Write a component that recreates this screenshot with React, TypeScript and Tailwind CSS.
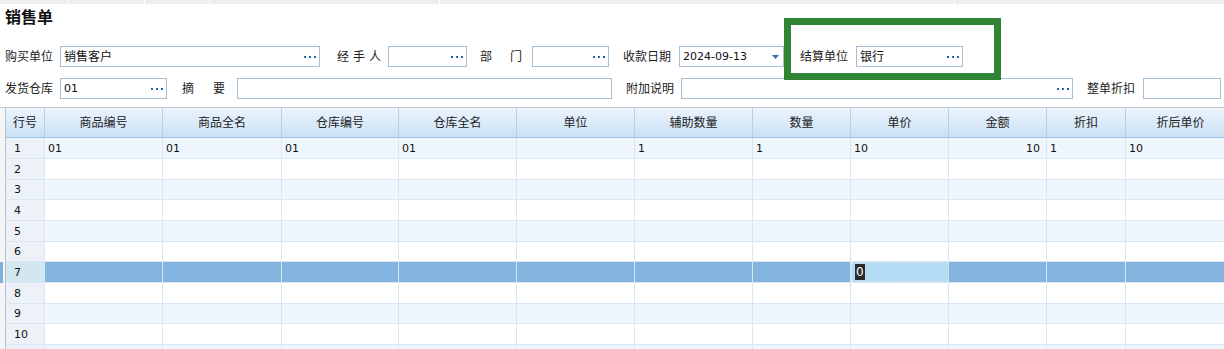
import React from "react";

type Col = { w: number; label: string };

const cols: Col[] = [
  { w: 39, label: "行号" },
  { w: 118, label: "商品编号" },
  { w: 119, label: "商品全名" },
  { w: 117, label: "仓库编号" },
  { w: 118, label: "仓库全名" },
  { w: 118, label: "单位" },
  { w: 118, label: "辅助数量" },
  { w: 98, label: "数量" },
  { w: 98, label: "单价" },
  { w: 98, label: "金额" },
  { w: 79, label: "折扣" },
  { w: 110, label: "折后单价" },
];

const firstRow = ["1", "01", "01", "01", "01", "", "1", "1", "10", "10", "1", "10"];
const rowHeights = [21, 21, 20, 21, 21, 20, 21, 21, 20, 21, 21];

const Dots = () => (
  <svg width="12" height="4" viewBox="0 0 12 4" className="shrink-0">
    <rect x="0" y="1" width="2" height="2" fill="#2c64ab" />
    <rect x="5" y="1" width="2" height="2" fill="#2c64ab" />
    <rect x="10" y="1" width="2" height="2" fill="#2c64ab" />
  </svg>
);

const Field = ({ w, value, dots = true }: { w: number; value?: string; dots?: boolean }) => (
  <div
    className="flex h-[21px] shrink-0 items-center justify-between border border-[#a6bfd6] bg-white pl-[3px] pr-[3px] text-[12px] leading-none text-[#111]"
    style={{ width: w }}
  >
    <span>{value}</span>
    {dots && <Dots />}
  </div>
);

const Label = ({ text, ml, w }: { text: string; ml: number; w: number }) => (
  <div className="shrink-0 text-[12px] leading-none text-[#222]" style={{ marginLeft: ml, width: w }}>
    {text}
  </div>
);

export default function App() {
  return (
    <div className="relative h-[349px] w-[1224px] overflow-hidden bg-white font-['DejaVu_Sans','Noto_Sans_CJK_SC',sans-serif]">
      {/* top strip */}
      <div className="flex h-[4px] bg-[#eeeeee]">
        <div className="w-[68px] border-r border-white" />
        <div className="w-[77px] border-r border-white" />
        <div className="w-[65px] border-r border-white" />
        <div className="w-[230px] border-r border-white" />
        <div className="w-[515px] border-r border-white" />
      </div>

      <div className="pl-[5px] pt-[3px]">
        <div className="h-[22px] text-[16px] font-bold leading-[22px] text-[#111]">销售单</div>

        {/* row 1 */}
        <div className="mt-[17px] flex items-center">
          <Label text="购买单位" ml={0} w={55} />
          <Field w={260} value="销售客户" />
          <div className="ml-[17px] w-[51px] shrink-0 text-[12px] leading-none tracking-[4px] text-[#222]">经手人</div>
          <Field w={79} />
          <div className="ml-[13px] flex w-[42px] shrink-0 justify-between text-[12px] leading-none text-[#222]">
            <span>部</span>
            <span>门</span>
          </div>
          <div className="w-[10px] shrink-0" />
          <Field w={77} />
          <Label text="收款日期" ml={14} w={56} />
          <div className="flex h-[21px] w-[105px] shrink-0 items-center justify-between border border-[#a6bfd6] bg-white pl-[3px] pr-[4px] text-[11px] leading-none text-[#111]">
            <span>2024-09-13</span>
            <svg width="7" height="4" viewBox="0 0 7 4">
              <path d="M0 0 H7 L3.5 4 Z" fill="#3d6fb6" />
            </svg>
          </div>
          <Label text="结算单位" ml={16} w={56} />
          <Field w={107} value="银行" />
        </div>

        {/* row 2 */}
        <div className="mt-[11px] flex items-center">
          <Label text="发货仓库" ml={0} w={55} />
          <div className="flex h-[21px] w-[107px] shrink-0 items-center justify-between border border-[#a6bfd6] bg-white pl-[3px] pr-[3px] text-[11px] leading-none text-[#111]">
            <span>01</span>
            <Dots />
          </div>
          <div className="ml-[15px] flex w-[43px] shrink-0 justify-between text-[12px] leading-none text-[#222]">
            <span>摘</span>
            <span>要</span>
          </div>
          <div className="w-[12px] shrink-0" />
          <Field w={375} dots={false} />
          <Label text="附加说明" ml={14} w={55} />
          <Field w={392} />
          <Label text="整单折扣" ml={14} w={56} />
          <Field w={78} dots={false} />
        </div>
      </div>

      {/* grid */}
      <div className="mt-[8px] flex border-t border-[#c3cad1]">
        <div className="flex w-[6px] shrink-0 flex-col border-r border-[#b9c4ce] bg-[#f3f5f7]">
          <div className="h-[30px]" />
          {rowHeights.map((h, i) => (
            <div key={i} className="flex" style={{ height: h }}>
              {i === 6 && <div className="w-[3px] bg-[#7fb1de]" />}
            </div>
          ))}
        </div>
        <div className="flex flex-col">
          <div className="flex h-[30px] border-b border-[#9fc2e2] bg-gradient-to-b from-[#ebf4fc] to-[#cbe1f5]">
            {cols.map((c, i) => (
              <div
                key={i}
                className="flex shrink-0 items-center justify-center border-r border-[#b3d0ea] text-[12px] leading-none text-[#222]"
                style={{ width: c.w }}
              >
                {c.label}
              </div>
            ))}
          </div>
          {rowHeights.map((h, r) => {
            const selected = r === 6;
            const last = r === rowHeights.length - 1;
            const bg = selected ? "bg-[#84b5e1]" : r % 2 === 0 ? "bg-[#eff6fe]" : "bg-white";
            return (
              <div key={r} className={`flex border-b border-[#d9e7f4] ${bg}`} style={{ height: h }}>
                {cols.map((c, i) => {
                  const text = r === 0 ? firstRow[i] : i === 0 && !last ? String(r + 1) : "";
                  let cls = "flex shrink-0 items-center border-r border-[#d9e7f4] px-[3px] text-[11px] leading-none text-[#111]";
                  if (i === 0) cls += (selected ? " bg-[#d3e7f0]" : " bg-[#edf2f8]") + " pl-[8px] text-[#000]";
                  if (i === 9) cls += " justify-end pr-[6px]";
                  if (selected && i === 8) cls += " bg-[#b4dcf4] border border-dashed border-[#9ccbe8]";
                  return (
                    <div key={i} className={cls} style={{ width: c.w }}>
                      {selected && i === 8 ? (
                        <span className="bg-[#2b2b2b] px-[1px] py-[2px] text-[12px] text-white">0</span>
                      ) : (
                        text
                      )}
                    </div>
                  );
                })}
              </div>
            );
          })}
        </div>
      </div>

      {/* highlight annotation */}
      <div className="pointer-events-none absolute left-[784px] top-[18px] h-[62px] w-[217px] border-[7px] border-[#2f8533]" />
    </div>
  );
}
